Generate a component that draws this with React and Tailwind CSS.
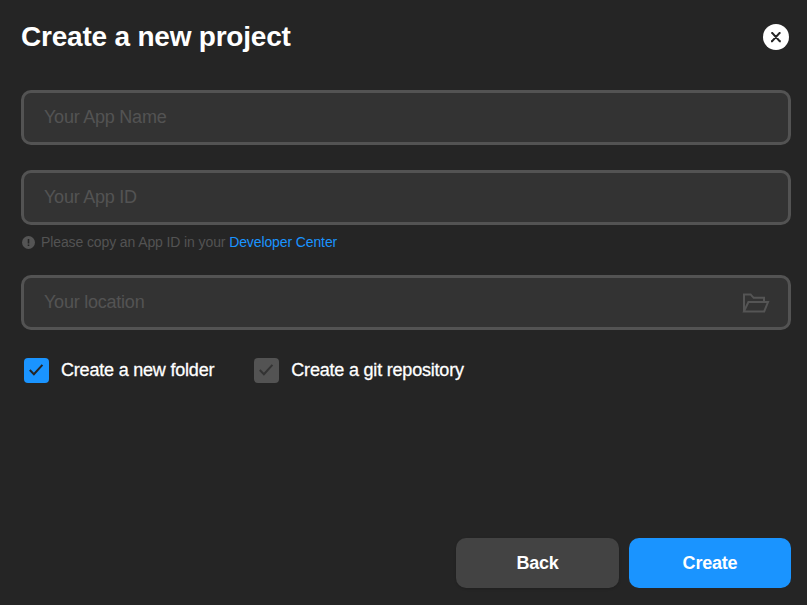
import React from "react";

function Field({ placeholder, children }) {
  return (
    <div className="flex h-[55px] items-center justify-between rounded-[10px] border-[3px] border-[#535353] bg-[#333333] pr-[18px] pl-5">
      <input
        placeholder={placeholder}
        className="min-w-0 flex-1 bg-transparent pb-px text-[18px] leading-6 tracking-[-0.23px] text-white outline-none placeholder:text-[#535353] placeholder:opacity-100"
      />
      {children}
    </div>
  );
}

function FolderIcon() {
  return (
    <svg className="mt-px" width="28" height="22" viewBox="0 0 28 22" fill="none" stroke="#555555" strokeWidth="2">
      <path d="M2 19.4V2.4H8.6L11.6 5.8H22V9.9" />
      <path d="M2 19.4L6.4 10H26L22.2 19.4H2Z" />
    </svg>
  );
}

function Check({ label, active }) {
  return (
    <label className="flex items-center gap-[12.5px]">
      <span className={`flex size-[25px] items-center justify-center rounded-[4px] ${active ? "bg-[#1a94ff]" : "bg-[#535353]"}`}>
        <svg width="25" height="25" viewBox="0 0 25 25" fill="none" stroke={active ? "#252525" : "#333333"} strokeWidth="2">
          <path d="M5.8 12L9.9 16.2L18.4 6.8" />
        </svg>
      </span>
      <span className="pb-px text-[18px] leading-6 tracking-[-0.2px] text-white [-webkit-text-stroke:0.3px_white]">{label}</span>
    </label>
  );
}

export default function App() {
  return (
    <main className="flex h-[605px] w-[807px] flex-col bg-[#252525] pt-[20px] pr-4 pb-[17px] pl-[21px] font-['Liberation_Sans',Arial,sans-serif]">
      <header className="flex h-[34px] items-center justify-between pr-[2px]">
        <h1 className="text-[28px] leading-[34px] font-bold tracking-[-0.21px] text-white">Create a new project</h1>
        <button className="flex size-[26px] items-center justify-center rounded-full bg-white">
          <svg width="26" height="26" viewBox="0 0 26 26" fill="none" stroke="#252525" strokeWidth="1.9">
            <path d="M8.3 9H9.3L16.7 17.2H17.8M17.5 9H16.5L9.1 17.2H8" />
          </svg>
        </button>
      </header>
      <section className="mt-9 flex flex-col">
        <Field placeholder="Your App Name" />
        <div className="mt-[25px]">
          <Field placeholder="Your App ID" />
        </div>
        <p className="mt-[7px] flex h-5 items-center gap-[6px] text-[14px] leading-5 tracking-[-0.11px] text-[#535353]">
          <svg className="ml-px" width="13" height="13" viewBox="0 0 13 13">
            <circle cx="6.5" cy="6.5" r="6.5" fill="#555555" />
            <path d="M6.5 3V7.5M6.5 8.6V10" stroke="#252525" strokeWidth="1.6" />
          </svg>
          <span>
            Please copy an App ID in your <a className="text-[#1a94ff]">Developer Center</a>
          </span>
        </p>
        <div className="mt-[23px]">
          <Field placeholder="Your location">
            <FolderIcon />
          </Field>
        </div>
        <div className="mt-[28px] ml-[2.5px] flex gap-[39.5px]">
          <Check label="Create a new folder" active />
          <Check label="Create a git repository" />
        </div>
      </section>
      <footer className="mt-auto flex justify-end gap-[10px]">
        <button className="h-[50px] w-[163px] rounded-[10px] bg-[#434343] text-[18px] font-bold tracking-[-0.2px] text-white shadow">Back</button>
        <button className="h-[50px] w-[162px] rounded-[10px] bg-[#1a94ff] text-[18px] font-bold tracking-[-0.2px] text-white">Create</button>
      </footer>
    </main>
  );
}
